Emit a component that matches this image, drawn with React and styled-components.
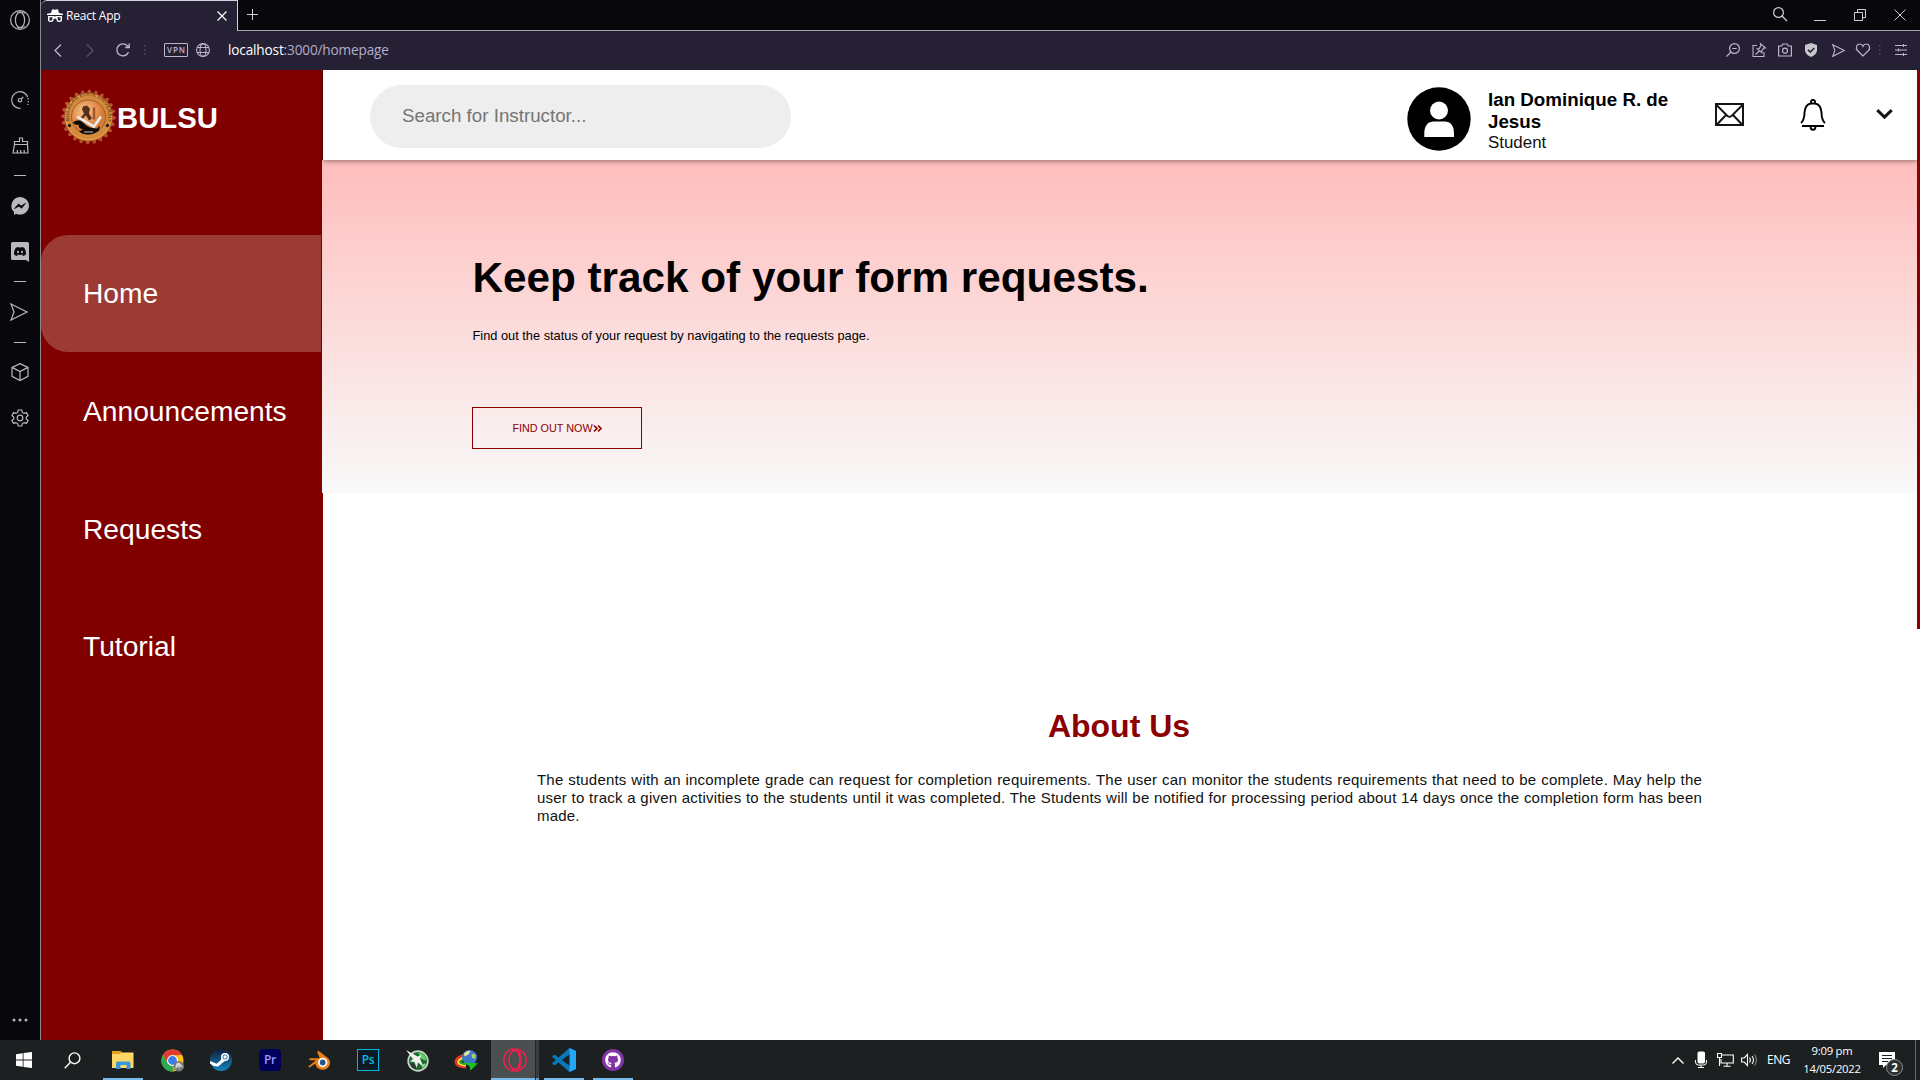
import React from "react";
import styled, { createGlobalStyle } from "styled-components";
import { FaDiscord, FaGithub } from "react-icons/fa";

const Global = createGlobalStyle`
  * { box-sizing: border-box; }
  body { margin: 0; background: #08070c; overflow: hidden; }
  h1, h2, p { margin: 0; }
  svg { display: block; flex: none; overflow: visible; }
`;
const ui = `"Open Sans", "Noto Sans", sans-serif`;
const arial = `"Liberation Sans", Arial, sans-serif`;

const Desktop = styled.div`
  width: 1920px; height: 1080px; display: flex; flex-direction: column;
  font-family: ${arial};
`;
const Windowed = styled.div`display: flex; height: 1040px;`;
const Rail = styled.aside`
  width: 40px; background: #08070c; display: flex; flex-direction: column; align-items: center;
  color: #b9b9bb; flex: none;
`;
const Slot = styled.div`
  width: ${(p) => p.$w || 20}px; height: ${(p) => p.$h || 20}px;
  margin-top: ${(p) => p.$top || 0}px; margin-left: ${(p) => p.$left || 0}px;
  display: flex; align-items: center; justify-content: center; flex: none;
  color: ${(p) => p.$c || "inherit"};
`;
const Dash = styled.div`width: 12px; height: 1px; background: #b9b9bb; margin-top: ${(p) => p.$top}px; flex: none;`;
const Browser = styled.div`
  width: 1880px; display: flex; flex-direction: column; border-left: 1px solid #8b8a90;
  background: #08070c;
`;
const TabBar = styled.div`display: flex; height: 31px; color: #d0d0d2;`;
const Tab = styled.div`
  width: 197px; height: 31px; background: #252033; border-top: 1px solid #d3d2d8; border-right: 1px solid #d3d2d8;
  border-top-left-radius: 6px; display: flex; align-items: center; padding: 0 10px 1px 6px; color: #fff; flex: none;
`;
const TabTitle = styled.span`
  font: 12px/16px ${ui}; letter-spacing: -0.2px; margin-left: 3px; flex: 1; white-space: nowrap;
`;
const TabRest = styled.div`flex: 1; display: flex; align-items: flex-start; border-bottom: 1px solid #a5a4a9;`;
const Spacer = styled.div`flex: 1;`;
const Toolbar = styled.div`
  height: 39px; background: #252033; display: flex; align-items: center; color: #bdb3d3; padding-bottom: 1px;
`;
const Vpn = styled.div`
  width: 24px; height: 14px; border: 1px solid #bdb3d3; border-radius: 1px; margin-left: 14px;
  font: 600 8px/12px ${ui}; letter-spacing: 0.9px; text-align: center; padding-left: 1px;
`;
const Url = styled.div`
  font: 13.6px/20px ${ui}; letter-spacing: -0.15px; margin-left: 15px; color: #b5abca; white-space: nowrap;
  b { font-weight: 400; color: #fff; }
`;
const Page = styled.div`height: 970px; display: flex; background: #fff;`;
const SideNav = styled.nav`width: 281px; background: #800000; flex: none; color: #fff;`;
const Brand = styled.div`
  height: 165px; display: flex; align-items: flex-start; padding: 19px 0 0 20px;
`;
const BrandName = styled.span`
  font-weight: 700; font-size: 29.3px; line-height: 32px; margin: 13px 0 0 1px;
`;
const NavItem = styled.a`
  display: flex; align-items: center; width: 280px; height: 117px; margin-bottom: 0.75px; padding-left: 42px; font-size: 28.2px;
  border-radius: 27px 0 0 27px; background: ${(p) => (p.$active ? "#9c3b33" : "transparent")};
`;
const Content = styled.main`flex: 1; display: flex; flex-direction: column; min-width: 0; background: linear-gradient(90deg, #800000 1px, #fff 1px);`;
const Header = styled.header`
  height: 90px; margin-left: 1px; background: #fff; display: flex; align-items: flex-start; flex: none;
  box-shadow: 0 1px 5px rgba(0, 0, 0, 0.45); position: relative; z-index: 1; clip-path: inset(0 0 -12px -4px);
`;
const Search = styled.div`
  width: 421px; height: 63px; border-radius: 32px; background: #eee; margin: 15px 0 0 47px;
  padding: 0 32px; color: #757575; font-size: 18.75px; line-height: 61px;
`;
const Profile = styled.div`width: 190px; margin: 19px 0 0 17px;`;
const Name = styled.div`font-weight: 700; font-size: 18.75px; line-height: 22px; color: #000;`;
const Role = styled.div`font-size: 16.9px; line-height: 20px; color: #111;`;
const Hero = styled.section`
  height: 333px; background: linear-gradient(#ffbdbd, #f9f9f9); padding: 93px 0 0 150px; flex: none;
`;
const HeroTitle = styled.h1`font-size: 42.25px; line-height: 50px; margin-left: 0.5px; color: #000; white-space: nowrap;`;
const HeroText = styled.p`font-size: 12.8px; line-height: 16px; margin: 25px 0 0 0.5px; color: #000;`;
const HeroButton = styled.button`
  width: 170px; height: 42px; margin: 63px 0 0; padding: 0; border: 1px solid #8b0000; background: transparent;
  color: #8b0000; font: 10.8px/14px ${arial}; display: flex; align-items: center; justify-content: center; white-space: nowrap;
`;
const About = styled.section`
  padding: 214px 215px 0 215px; display: flex; flex-direction: column; align-items: center;
`;
const AboutTitle = styled.h2`color: #8b0000; font-size: 32px; line-height: 38px; margin-right: 1px;`;
const AboutText = styled.p`
  width: 1165px; margin-top: 26px; font-size: 15px; line-height: 18px; text-align: justify; color: #111; letter-spacing: 0.2px;
`;
const ScrollTrack = styled.div`width: 3px; background: #fff; flex: none;`;
const ScrollThumb = styled.div`height: 559px; background: #8b0000;`;
const Taskbar = styled.footer`height: 40px; background: #1c2021; display: flex; color: #fff; font-family: ${ui};`;
const Task = styled.div`
  width: ${(p) => p.$w || 40}px; height: 40px; margin-left: ${(p) => p.$left || 0}px; flex: none;
  display: flex; align-items: center; justify-content: center;
  background: ${(p) => (p.$active ? "#4b4f50" : "transparent")};
  box-shadow: ${(p) => (p.$open ? "inset 0 -2px #76b9ed" : "none")};
`;
const Stack = styled.div`
  width: 4px; height: 40px; background: #3a3e3f; border-left: 1px solid #222627; box-shadow: inset 0 -2px #5f9ac8;
`;
const AdobeTile = styled.div`
  width: 22px; height: 22px; display: flex; align-items: center; justify-content: center; line-height: 1;
  font-size: 12px; font-weight: 600; background: ${(p) => p.$bg}; color: ${(p) => p.$fg};
  border: 1px solid ${(p) => p.$line}; border-radius: ${(p) => p.$r}px; letter-spacing: -0.3px;
`;
const Lang = styled.div`font-size: 12px; line-height: 40px; letter-spacing: -0.5px; width: 24px; margin-left: 9px;`;
const Clock = styled.div`
  width: 60px; margin-left: 11px; padding-top: 2px; font-size: 11.3px; line-height: 18px; text-align: center;
  letter-spacing: -0.25px; white-space: nowrap;
`;
const Notice = styled.div`position: relative; width: 24px; height: 40px; margin-left: 17px; padding-top: 12px;`;
const Badge = styled.span`
  position: absolute; left: 7px; top: 19px; width: 17px; height: 17px; border-radius: 50%; background: #2c3031;
  border: 1px solid #8c8f90; font-size: 11.5px; font-weight: 700; line-height: 15px; text-align: center;
`;
const ShowDesktop = styled.div`width: 5px; border-left: 1px solid #686b6c; height: 40px;`;

const Ic = ({ s = 20, h, vb = "0 0 20 20", sw = 1.2, fill = "none", children }) => (
  <svg width={s} height={h || s} viewBox={vb} fill={fill} stroke={fill === "none" ? "currentColor" : "none"} strokeWidth={sw}>
    {children}
  </svg>
);
const SendIcon = ({ s }) => (
  <Ic s={s} vb="0 0 18 18" sw={s < 16 ? 1.5 : 1.2}><path d="M1 1 17 9 1 17 4 9Z" /></Ic>
);
const cogPoints = Array.from({ length: 96 }, (_, i) => {
  const a = (i / 96) * Math.PI * 2;
  const r = i % 4 < 2 ? 27.3 : 24.3;
  return `${(27.5 + r * Math.cos(a)).toFixed(2)},${(27.5 + r * Math.sin(a)).toFixed(2)}`;
}).join(" ");

const Seal = () => (
  <svg width="55" height="56" viewBox="0 0 55 55">
    <defs>
      <radialGradient id="seal" cx=".4" cy=".35"><stop offset="0" stopColor="#f9c78e" /><stop offset="1" stopColor="#d87d38" /></radialGradient>
      <path id="ring" d="M8.5 31a19.7 19.7 0 1 1 38 0" />
    </defs>
    <polygon points={cogPoints} fill="#b4552f" />
    <circle cx="27.5" cy="27.5" r="23.6" fill="#d48a3c" />
    <circle cx="27.5" cy="27.5" r="22.8" fill="none" stroke="#e8b055" strokeWidth=".8" />
    <text fontSize="5" fontFamily="Liberation Sans" fontWeight="700" fill="#6d4a1e"><textPath href="#ring" textLength="76">BULACAN STATE UNIVERSITY</textPath></text>
    <circle cx="27.5" cy="27.5" r="17" fill="url(#seal)" stroke="#8b4b20" strokeWidth=".7" />
    <path d="m22 17 4-1 3 3-1 5 3 5-3 2-3-5-4 4-1-2 3-4-2-4Z" fill="#54301d" />
    <path d="M33 18v12" stroke="#a5562a" strokeWidth="2.5" />
    <path d="M12 33c4-3 7-3 10 0s7 6 14 6l3-3-1 5c-6 5-15 5-20 1l4-2c-4-1-5-3-4-5-2 1-5 0-6-2Z" fill="#0e0b08" />
    <path d="m16 27 17 10 7-10" fill="none" stroke="#ececf0" strokeWidth="2.6" />
    <circle cx="8.5" cy="36" r="1.7" fill="#25201a" /><circle cx="46.5" cy="36" r="1.7" fill="#25201a" />
    <path d="M23 42.500h9" stroke="#8c8a88" strokeWidth="1.500" />
  </svg>
);

function LeftRail() {
  return (
    <Rail>
      <Slot $top={10}><Ic><circle cx="10" cy="10" r="9.400" /><ellipse cx="10" cy="10" rx="4.600" ry="7.600" /><path d="M7 2.300A9 9 0 0 1 15 3.500M7 17.700A9 9 0 0 0 15 16.500" strokeWidth=".8" /></Ic></Slot>
      <Slot $top={60} $left={-1}><Ic s={18} vb="0 0 18 18"><path d="M9.500 17.300A8.300 8.300 0 1 1 16.700 6" /><path d="M17.200 7v1.500m0 1.500v1.500m-.4 1.500v1" /><circle cx="9" cy="9.200" r="1.700" /><path d="m10.300 8 2-2.200" /></Ic></Slot>
      <Slot $top={25}><Ic s={17} vb="0 0 17 17"><path d="M2.500 7.500V4.500h5V1h3v3.500h5v3ZM2.500 7.500 1 16h15l-.5-8.500M5 16l.5-3M8.700 16v-3M12.300 16l-.2-3" /></Ic></Slot>
      <Dash $top={20} />
      <Slot $top={20}><Ic s={18} vb="0 0 18 18" fill="#b9b9bb"><path d="M9 0a9 8.800 0 1 1-4 16.700L3 18V15A8.800 8.800 0 0 1 9 0Z" /><path d="m3.500 11.500 4-4.500 2.500 2 4.500-2.500-4 4.700-2.500-2Z" fill="#08070c" stroke="#08070c" strokeWidth=".8" /></Ic></Slot>
      <Slot $top={26}>
        <Ic s={18} h={20} vb="0 0 18 20" fill="#b9b9bb"><path d="M1.500 0h15Q18 0 18 1.500V20l-3-2H1.500Q0 18 0 16.500v-15Q0 0 1.500 0Z" /><g transform="translate(2.500 3)"><FaDiscord size={13} color="#08070c" /></g></Ic>
      </Slot>
      <Dash $top={19} />
      <Slot $top={20} $left={-2}><SendIcon s={18} /></Slot>
      <Dash $top={20} />
      <Slot $top={19} $left={-1}><Ic s={18} vb="0 0 18 18"><path d="m9 .6 8 3.800v9L9 17.500 1 13.400v-9ZM1 4.400l8 4.200 8-4.200M9 8.600v9" /></Ic></Slot>
      <Slot $top={26} $left={-1}><Ic s={18} vb="0 0 18 18"><path d="M7.200 1h3.600l.5 2.400 1.800 1 2.300-.8 1.700 3L15.300 8v2l1.800 1.400-1.700 3-2.300-.8-1.800 1-.5 2.400H7.200l-.5-2.400-1.800-1-2.300.8-1.700-3L2.700 10V8L.9 6.600l1.700-3 2.300.8 1.800-1Z" /><circle cx="9" cy="9" r="2.800" /></Ic></Slot>
      <Slot $top={582}><Ic s={16} h={4} vb="0 0 16 4" fill="#b9b9bb"><circle cx="2" cy="2" r="1.500" /><circle cx="8" cy="2" r="1.500" /><circle cx="14" cy="2" r="1.500" /></Ic></Slot>
    </Rail>
  );
}

const Grip = () => <Ic s={2} h={10} vb="0 0 2 10" fill="#51496a"><path d="M0 0h1.500v1.500H0zM0 4.200h1.500v1.500H0zM0 8.500h1.500V10H0z" /></Ic>;

function BrowserChrome() {
  return (
    <>
      <TabBar>
        <Tab>
          <Ic s={16} h={13} vb="0 0 16 13" fill="#fff"><path d="M4 4 5 .5Q6 0 8 .7 10 0 11 .5L12 4l4 .8V6H0V4.800ZM1 7h5.500q1.500.8 3 0H15v4q0 2-2.300 2h-1Q9.500 13 9.400 10 8 9 6.600 10 6.500 13 4.300 13h-1Q1 13 1 11Zm1.500 1.300V11q.2.800 1 .8h.8Q5.400 11.500 5.500 8.300Zm8 0q.1 3.200 1.200 3.500h.8q.8 0 1-.8V8.300Z" fillRule="evenodd" /></Ic>
          <TabTitle>React App</TabTitle>
          <Ic s={10} vb="0 0 10 10" sw={1.200}><path d="m.5.5 9 9m0-9-9 9" /></Ic>
        </Tab>
        <TabRest>
          <Slot $w={12} $h={12} $left={8} $top={8.5}><Ic s={11} vb="0 0 11 11" sw={1}><path d="M5.500 0v11M0 5.500h11" /></Ic></Slot>
          <Spacer />
          <Slot $top={4} $w={20}><Ic s={14} vb="0 0 14 14"><circle cx="5.500" cy="5.500" r="4.900" /><path d="m9 9 5 5" /></Ic></Slot>
          <Slot $top={10} $left={20}><Ic s={12} h={1} vb="0 0 12 1" sw={1}><path d="M0 .5h12" /></Ic></Slot>
          <Slot $top={5} $left={20}><Ic s={12} vb="0 0 12 12" sw={1}><path d="M.5 3.500h8v8h-8ZM3.500 3.500v-3h8v8h-3" /></Ic></Slot>
          <Slot $top={5} $left={20}><Ic s={12} vb="0 0 12 12" sw={1}><path d="m.5.500 11 11m0-11-11 11" /></Ic></Slot>
          <Slot $w={10} />
        </TabRest>
      </TabBar>
      <Toolbar>
        <Slot $left={7}><Ic s={8} h={13} vb="0 0 8 13" sw={1.3}><path d="M7 .5 1 6.500l6 6" /></Ic></Slot>
        <Slot $left={12} $c="#5b526f"><Ic s={8} h={13} vb="0 0 8 13"><path d="m1 .5 6 6-6 6" /></Ic></Slot>
        <Slot $left={13}><Ic s={14} vb="0 0 14 14" sw={1.4}><path d="M12.500 9A6 6 0 1 1 11.500 3l1.700 1.500M13.200.5v4h-4" /></Ic></Slot>
        <Slot $left={8} $w={8}><Grip /></Slot>
        <Slot $w={1} />
        <Vpn>VPN</Vpn>
        <Slot $left={5}><Ic s={14} vb="0 0 14 14" sw={1.100}><circle cx="7" cy="7" r="6.400" /><ellipse cx="7" cy="7" rx="3" ry="6.400" /><path d="M1.300 4.500h11.400M1.300 9.500h11.400" /></Ic></Slot>
        <Url><b>localhost</b>:3000/homepage</Url>
        <Spacer />
        <Slot><Ic s={14} vb="0 0 14 14"><circle cx="8.500" cy="5.500" r="4.900" /><path d="M5 9 .5 13.500M6.300 5.500h4.400" /></Ic></Slot>
        <Slot $left={6}><Ic s={14} vb="0 0 14 14" sw={1.100}><path d="M5 2.500H1v11h11V9M8.500.8l5 4-1.800.3-2 2.700.2 1.800L5.300 5.800l2-.2 1.500-3ZM7.300 8 3.500 11.500" /></Ic></Slot>
        <Slot $left={6}><Ic s={14} vb="0 0 14 14"><path d="M.6 3h3.200l1-2h4.400l1 2h3.200v10H.6Z" /><circle cx="7" cy="7.700" r="2.500" /></Ic></Slot>
        <Slot $left={6}><Ic s={14} vb="0 0 14 14" fill="#c9c6cf"><path d="M7 0 13 2v5.500Q12.500 11.500 7 14 1.500 11.500 1 7.500V2Z" /><path d="m4 6.800 2.300 2.300 4-4.200" fill="none" stroke="#252033" strokeWidth="1.500" /></Ic></Slot>
        <Slot $left={7}><SendIcon s={13} /></Slot>
        <Slot $left={5}><Ic s={14} vb="0 0 14 14"><path d="M7 13 1.500 7.500C-1 4.500 1 1 3.800 1 5.500 1 6.500 2 7 3.300 7.500 2 8.500 1 10.200 1 13 1 15 4.500 12.500 7.500Z" /></Ic></Slot>
        <Slot $left={2} $w={10}><Grip /></Slot>
        <Slot $left={6}><Ic s={12} vb="0 0 12 12" sw={1}><path d="M0 1.500h12M0 6h12M0 10.500h12M8.500 0v3M3.500 4.500v3M8.500 9v3" /></Ic></Slot>
        <Slot $w={9} />
      </Toolbar>
    </>
  );
}

function Topbar() {
  return (
    <Header>
      <Search>Search for Instructor...</Search>
      <Spacer />
      <Slot $w={64} $h={64} $top={16.5}>
        <Ic s={64} vb="0 0 64 64" fill="#fff"><circle cx="32" cy="32" r="31.700" fill="#000" /><circle cx="32" cy="23.500" r="9" /><path d="M17.300 50V47Q17.300 34.500 27 34.500H37.500Q47 34.500 47 47v3Z" /></Ic>
      </Slot>
      <Profile><Name>Ian Dominique R. de Jesus</Name><Role>Student</Role></Profile>
      <Slot $w={30} $h={24} $left={36} $top={32.500} $c="#151515">
        <Ic s={29} h={23} vb="0 0 29 23" sw={2}><path d="M1 1h27v21H1ZM1.500 2l11 11q2 1.600 4 0l11-11M2 21.500 11 12M27 21.500 18 12" /></Ic>
      </Slot>
      <Slot $w={28} $h={32} $left={55} $top={28.500} $c="#000">
        <Ic s={26} h={32} vb="0 0 26 32" sw={1.900}><path d="M1 24Q4.500 21 4.500 13.500 5 5.500 11 4.500h4q6 1 6.500 9Q21.500 21 25 24M2 27h22M10.500 27.500q0 3.300 2.500 3.300t2.500-3.300M11 4.500q-.7-3.500 2-3.500t2 3.500" /></Ic>
      </Slot>
      <Slot $w={20} $h={14} $left={47} $top={37} $c="#151515"><Ic s={17} h={10} vb="0 0 17 10" sw={3}><path d="m1.300 1.200 7.200 7 7.200-7" /></Ic></Slot>
      <Slot $w={23} />
    </Header>
  );
}

const Wave = () => (
  <Ic s={17} h={14} vb="0 0 17 14" sw={1.100}><path d="M.6 5h2.600L6.500 1.500v11L3.200 9H.6Z" /><path d="M8.500 4.500q1.800 2.500 0 5M11 3q3 4 0 8" /><path d="M13.500 1.500q4 5.500 0 11" opacity=".45" /></Ic>
);

function WindowsBar() {
  return (
    <Taskbar>
      <Task $left={4}><Ic s={16} vb="0 0 16 16" fill="#fff"><path d="M0 2.200 6.700 1.200V7.600H0ZM7.500 1.100 16 0V7.600H7.500ZM0 8.400H6.700V14.800L0 13.800ZM7.500 8.400H16V16L7.500 14.900Z" /></Ic></Task>
      <Task $left={8}><Ic s={17} vb="0 0 17 17" sw={1.400}><circle cx="10.500" cy="6.300" r="5.400" /><path d="M6.500 10.300.7 16.200" /></Ic></Task>
      <Task $left={11} $open>
        <Ic s={22} h={18} vb="0 0 22 18" fill="#ffd766"><path d="M0 0h8.500l2 1.500H0Z" fill="#e8a317" /><path d="M0 1.500h21.500V17H0Z" /><path d="M0 1h9.500L8 3H0Z" fill="#e0a020" /><path d="M4 18v-6q0-1.500 1.500-1.500H17q1.500 0 1.500 1.500v6h-4v-4h-6v4Z" fill="#3b97d8" /></Ic>
      </Task>
      <Task $left={9}>
        <Ic s={23} vb="0 0 24 24" fill="#fbc116"><circle cx="12" cy="12" r="11.500" /><path d="M2 6.200A11.500 11.500 0 0 1 22 6.300L12 6.500 6.500 14Z" fill="#e33b2e" /><path d="M2 6.200 7.200 15 12 17.500l1.500 5.900A11.500 11.500 0 0 1 2 6.200Z" fill="#2da94f" /><circle cx="12" cy="12" r="5.700" fill="#fff" /><circle cx="12" cy="12" r="4.600" fill="#3b7ded" /><circle cx="18.500" cy="18" r="5.500" fill="#777" /><path d="M15 21q0-7 3-7t5 6l-3-2-1 3-1-3Z" fill="#d3d3d3" /></Ic>
      </Task>
      <Task $left={9}>
        <svg width="22" height="22" viewBox="0 0 22 22"><defs><linearGradient id="steam" x2="0" y2="1"><stop stopColor="#111c40" /><stop offset="1" stopColor="#1587bd" /></linearGradient></defs><circle cx="11" cy="11" r="11" fill="url(#steam)" /><path d="m.2 12 6.500 2.800 4.600-4.300 1.200-4.500 5 4-5.600 4.300-3.600 3.200Q3.500 18 0 14.500Z" fill="#fff" /><circle cx="15" cy="8" r="4" fill="#fff" /><circle cx="15" cy="8" r="2.500" fill="#28628d" /><circle cx="15" cy="8" r="1.700" fill="#fff" /></svg>
      </Task>
      <Task $left={9}><AdobeTile $bg="#00005b" $fg="#9999ff" $line="#00005b" $r={4}>Pr</AdobeTile></Task>
      <Task $left={9}>
        <Ic s={23} h={19} vb="0 0 23 19" fill="#ed7f14"><path d="M9.500.3q.8-.6 1.700 0l9 7a7.400 6.900 0 1 1-12.900 5.300L2 16.300Q.5 17 .3 15.500L8 9.300H1.700Q.5 8 2 7.200h9.800L9.500 2Z" /><circle cx="14.700" cy="11.500" r="4.700" fill="#fff" /><circle cx="14.700" cy="11.500" r="2.900" fill="#265787" /></Ic>
      </Task>
      <Task $left={9}><AdobeTile $bg="#0b1a24" $fg="#00b7e6" $line="#00b7e6" $r={0}>Ps</AdobeTile></Task>
      <Task $left={9}>
        <Ic s={23} vb="0 0 23 23" fill="#c9d2c9"><circle cx="12" cy="12" r="10.700" /><circle cx="12" cy="12" r="9" fill="#1c6a2f" /><path d="M12 3.200q8 1 8.500 8.500l-5.500-2Z" fill="#55d65f" /><path d="M4 14q1 5 6 6.500l1-5Z" fill="#2e3a30" /><path d="M17 15q2-1 3 0-1 3-4 4.500Z" fill="#6be372" /><path d="M0 1 11.500 7.500 15.500 6 14 9.500 17.500 18 12 13.500 10.500 19 8.500 13 4 12.500 7 10Z" fill="#f0f0f0" /></Ic>
      </Task>
      <Task $left={9}>
        <Ic s={24} h={21} vb="0 0 24 21"><path d="M10 5.500Q1.500 8 2 12.500 3 17 12 17" stroke="#e33629" strokeWidth="3" /><path d="M10 7.500Q4 9.500 4.300 12.500 5 15 12 15.500" stroke="#ffe229" strokeWidth="2.200" /><path d="M10 9.500Q6 11 6.500 12.500 8 14 12 14" stroke="#22a83a" strokeWidth="1.800" /><circle cx="15.500" cy="7.500" r="7.500" fill="#3c77ca" stroke="none" /><path d="M10 3.500q3-3.500 6.500-2.500l-2 3.500-4 2Z" fill="#e8e0a0" stroke="none" /><path d="M17.500 4q3-1 4.500 1l-1 4-3-1Z" fill="#a9c96c" stroke="none" /><path d="m9 12.500 15 .7-7.500 7.300-1-4.500Z" fill="#20bf20" stroke="none" /></Ic>
      </Task>
      <Task $left={5} $w={44} $active $open>
        <Slot $left={4} $w={24} $c="#fa1e4e"><Ic s={24} vb="0 0 24 24" sw={1.300}><circle cx="12" cy="12" r="11.200" /><ellipse cx="12" cy="12" rx="6" ry="9.500" /><path d="M9 2.600q6-1 9 3.400M9 21.400q6 1 9-3.400M15 5q4 6 0 14" /></Ic></Slot>
      </Task>
      <Stack />
      <Task $left={5} $open>
        <Ic s={24} vb="0 0 24 24" fill="#23a8f2"><path d="M17.500 0 24 3v18l-6.500 3L0 8.800 2.500 6.500 18 18V6L2.500 17.500 0 15.200Z" fill="#0878bd" /><path d="m17.500 0 6.500 3v18l-6.500 3Z" /></Ic>
      </Task>
      <Task $left={9} $open>
        <Ic s={22} vb="0 0 22 22" fill="#8534a7"><circle cx="11" cy="11" r="11" /><g transform="translate(3 3)"><FaGithub size={16} color="#fff" /></g></Ic>
      </Task>
      <Spacer />
      <Slot $h={40} $w={14}><Ic s={12} h={7} vb="0 0 12 7" sw={1.400}><path d="m.5 6.500 5.500-5.500 5.500 5.500" /></Ic></Slot>
      <Slot $h={40} $w={16} $left={8}><Ic s={12} h={16} vb="0 0 12 16" sw={1}><rect x="3" y="0" width="6.500" height="11" rx="1" fill="#fff" /><path d="M.5 8v2q0 3 3 3h5q3 0 3-3V8M6 13v2.500M3 15.500h6" /></Ic></Slot>
      <Slot $h={40} $w={18} $left={7}><Ic s={17} h={14} vb="0 0 17 14" sw={1.100}><path d="M4.500 2H16.300v8H4V6M10 10v3M6.500 13.200h7M.5.500h4v4h-4ZM2.500 4.500v8.500" /></Ic></Slot>
      <Slot $h={40} $w={18} $left={6}><Wave /></Slot>
      <Lang>ENG</Lang>
      <Clock>9:09 pm<br />14/05/2022</Clock>
      <Notice>
        <Ic s={16} h={16} vb="0 0 16 16" fill="#fff"><path d="M0 0h16v13H7l-3 3v-3H0Z" /><path d="M3 3.500h10M3 6.500h10M3 9.500h6" stroke="#1c2021" strokeWidth="1" /></Ic>
        <Badge>2</Badge>
      </Notice>
      <Slot $w={12} />
      <ShowDesktop />
    </Taskbar>
  );
}

export default function App() {
  return (
    <Desktop>
      <Global />
      <Windowed>
        <LeftRail />
        <Browser>
          <BrowserChrome />
          <Page>
            <SideNav>
              <Brand><Seal /><BrandName>BULSU</BrandName></Brand>
              {["Home", "Announcements", "Requests", "Tutorial"].map((n, i) => (
                <NavItem key={n} $active={i === 0}>{n}</NavItem>
              ))}
            </SideNav>
            <Content>
              <Topbar />
              <Hero>
                <HeroTitle>Keep track of your form requests.</HeroTitle>
                <HeroText>Find out the status of your request by navigating to the requests page.</HeroText>
                <HeroButton>FIND OUT NOW<Ic s={9} h={7} vb="0 0 9 7" sw={1.700}><path d="m1 .5 3 3-3 3M5 .500l3 3-3 3" /></Ic></HeroButton>
              </Hero>
              <About>
                <AboutTitle>About Us</AboutTitle>
                <AboutText>
                  The students with an incomplete grade can request for completion requirements. The user can monitor the students requirements that need to be complete. May help the user to track a given activities to the students until it was completed. The Students will be notified for processing period about 14 days once the completion form has been made.
                </AboutText>
              </About>
            </Content>
            <ScrollTrack><ScrollThumb /></ScrollTrack>
          </Page>
        </Browser>
      </Windowed>
      <WindowsBar />
    </Desktop>
  );
}
